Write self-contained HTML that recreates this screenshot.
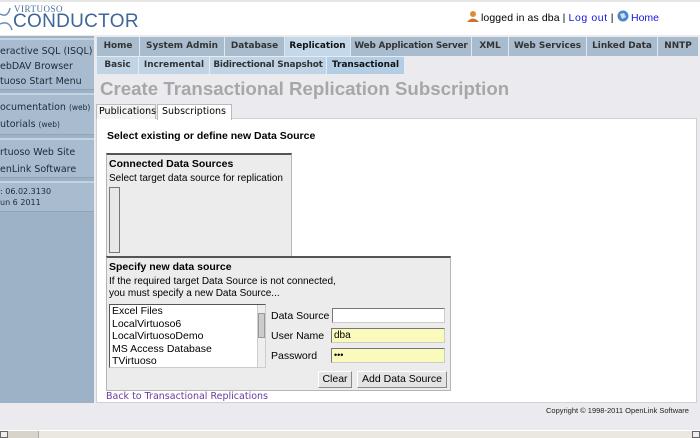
<!DOCTYPE html>
<html><head><style>
*{margin:0;padding:0;box-sizing:border-box}
body{width:700px;height:438px;overflow:hidden;font-family:"DejaVu Sans","Liberation Sans",sans-serif;font-size:10px;background:#ebebef;position:relative;color:#000}
.a{position:absolute}
.hdr{left:0;top:0;width:700px;height:35px;background:#fff;border-top:2px solid #e6e6e6}
.side{left:0;top:36px;width:94px;height:367px;background:#9db2c6;overflow:hidden}
.grp{position:absolute;left:0;width:94px;background:#a9bccf;border-top:2px solid #c4d3e0;border-bottom:1px solid #8ea4b8}
.grp div{height:15px;line-height:15px;white-space:nowrap;overflow:hidden;font-size:9.5px;color:#1a2a3a}
.tab{position:absolute;top:37px;height:19px;line-height:18px;background:#a8bccd;font-weight:bold;font-size:8.9px;color:#333;white-space:nowrap;text-align:center;overflow:hidden;border-left:1px solid #dfe6ee}
.tab.on{background:#c4d8ea;color:#111}
.stab{position:absolute;top:56px;height:18px;line-height:17px;background:#c0d4e6;font-weight:bold;font-size:8.9px;color:#333;white-space:nowrap;text-align:center;overflow:hidden;border-left:1px solid #e4ecf4;border-top:1px solid #e4ecf4}
.stab.on{background:#b2cde4;color:#111}
h1{position:absolute;left:100px;top:78px;font-family:"Liberation Sans",sans-serif;font-size:18.7px;font-weight:bold;color:#a7a7a7;white-space:nowrap}
.panel{left:96px;top:118px;width:601px;height:285px;background:#fff;border:1px solid #d0d0d0}
.ptab{top:104px;height:15px;line-height:14px;font-size:9.5px;padding:0 2px;border:1px solid #bbb;border-bottom:none;background:#f4f4f4;white-space:nowrap}
.box{background:#ececec;border:1px solid #b5b5b5;border-top:2px solid #555}
.fld{position:absolute;height:15px;border:1px solid #777;border-right-color:#ccc;border-bottom-color:#ccc;font-size:10px;line-height:13px;padding-left:2px}
.btn{position:absolute;height:17px;line-height:15px;background:#e4e4e4;border:1px solid #888;border-top-color:#fff;border-left-color:#fff;font-size:10.5px;text-align:center;font-family:"Liberation Sans",sans-serif}
</style></head><body>
<div class="a hdr"></div>
<svg class="a" style="left:0;top:4px" width="14" height="28"><path d="M0 10 Q8 14 10 4 M0 20 Q9 16 12 26" stroke="#6b8db8" stroke-width="1.5" fill="none"/></svg>
<div class="a" style="left:14px;top:4px;font-family:'Liberation Serif',serif;font-size:9px;color:#4a6e9c;letter-spacing:0.5px">VIRTUOSO</div>
<div class="a" style="left:13px;top:11px;font-family:'Liberation Sans',sans-serif;font-size:19px;color:#3f6699;letter-spacing:0.3px">CONDUCTOR</div>
<svg class="a" style="left:467px;top:10px" width="12" height="12"><circle cx="6" cy="4" r="3" fill="#e08a3a"/><path d="M0 12 Q6 5 12 12Z" fill="#d0702a"/></svg>
<div class="a" style="left:481px;top:12px;font-size:10.5px;font-family:'Liberation Sans',sans-serif;white-space:nowrap;letter-spacing:0.1px">logged in as dba | <span style="color:#1515e0;letter-spacing:0.6px">Log out</span> |</div>
<svg class="a" style="left:617px;top:10px" width="12" height="12"><circle cx="6" cy="6" r="5.5" fill="#4a86d0"/><path d="M3 4 L7 3 L9 7 L5 9Z" fill="#cfe2f5"/></svg>
<div class="a" style="left:631px;top:12px;font-size:10.5px;font-family:'Liberation Sans',sans-serif;color:#1515e0">Home</div>
<div class="a side">
<div class="grp" style="top:2px;height:52px;padding-top:4px"><div>eractive SQL (ISQL)</div><div>ebDAV Browser</div><div>tuoso Start Menu</div></div>
<div class="grp" style="top:57px;height:42px;padding-top:5px"><div>ocumentation <small style="font-size:7.5px">(web)</small></div><div style="margin-top:2px">utorials <small style="font-size:7.5px">(web)</small></div></div>
<div class="grp" style="top:102px;height:40px;padding-top:5px"><div>rtuoso Web Site</div><div style="margin-top:2px">enLink Software</div></div>
<div class="grp" style="top:145px;height:31px;padding-top:3px"><div style="height:11px;line-height:11px;font-size:8px">: 06.02.3130</div><div style="height:11px;line-height:11px;font-size:8px">un 6 2011</div></div>
</div>
<div class="tab" style="left:96px;width:43px">Home</div>
<div class="tab" style="left:139px;width:85px">System Admin</div>
<div class="tab" style="left:224px;width:60px">Database</div>
<div class="tab on" style="left:284px;width:66px">Replication</div>
<div class="tab" style="left:350px;width:121px;letter-spacing:-0.2px">Web Application Server</div>
<div class="tab" style="left:471px;width:37px">XML</div>
<div class="tab" style="left:508px;width:78px">Web Services</div>
<div class="tab" style="left:586px;width:71px">Linked Data</div>
<div class="tab" style="left:657px;width:41px">NNTP</div>
<div class="stab" style="left:96px;width:42px">Basic</div>
<div class="stab" style="left:138px;width:71px">Incremental</div>
<div class="stab" style="left:209px;width:117px;letter-spacing:-0.2px">Bidirectional Snapshot</div>
<div class="stab on" style="left:326px;width:78px">Transactional</div>
<h1>Create Transactional Replication Subscription</h1>
<div class="a panel"></div>
<div class="a ptab" style="left:96px;width:60px">Publications</div>
<div class="a ptab" style="left:157px;width:75px;background:#fff;height:16px;padding:0 4px">Subscriptions</div>
<div class="a" style="left:107px;top:130px;font-weight:bold;font-size:10.5px;font-family:'Liberation Sans',sans-serif">Select existing or define new Data Source</div>
<div class="a box" style="left:106px;top:153px;width:186px;height:104px"></div>
<div class="a" style="left:109px;top:158px;font-weight:bold;font-size:10.5px;font-family:'Liberation Sans',sans-serif">Connected Data Sources</div>
<div class="a" style="left:109px;top:173px;font-size:10px;font-family:'Liberation Sans',sans-serif;white-space:nowrap">Select target data source for replication</div>
<div class="a" style="left:109px;top:187px;width:11px;height:66px;border:1px solid #777;background:#e8e8e8"></div>
<div class="a box" style="left:106px;top:256px;width:345px;height:135px"></div>
<div class="a" style="left:109px;top:261px;font-weight:bold;font-size:10.5px;font-family:'Liberation Sans',sans-serif">Specify new data source</div>
<div class="a" style="left:109px;top:276px;font-size:10px;line-height:12px;font-family:'Liberation Sans',sans-serif;white-space:nowrap">If the required target Data Source is not connected,<br>you must specify a new Data Source...</div>
<div class="a" style="left:109px;top:304px;width:157px;height:64px;border:1px solid #555;border-right-color:#ccc;border-bottom-color:#ccc;background:#fff;font-size:10.5px;line-height:12.5px;padding-left:2px;font-family:'Liberation Sans',sans-serif">Excel Files<br>LocalVirtuoso6<br>LocalVirtuosoDemo<br>MS Access Database<br>TVirtuoso</div>
<div class="a" style="left:257px;top:305px;width:8px;height:62px;background:#eee;border-left:1px solid #ccc"><div style="margin-top:8px;height:25px;background:#ccc;border:1px solid #999"></div></div>
<div class="a" style="left:271px;top:310px;font-size:10.5px;font-family:'Liberation Sans',sans-serif">Data Source</div>
<div class="a" style="left:271px;top:330px;font-size:10.5px;font-family:'Liberation Sans',sans-serif">User Name</div>
<div class="a" style="left:271px;top:350px;font-size:10.5px;font-family:'Liberation Sans',sans-serif">Password</div>
<div class="fld" style="left:332px;top:308px;width:113px;background:#fff"></div>
<div class="fld" style="left:331px;top:328px;width:114px;background:#fafabd;font-family:'Liberation Sans',sans-serif">dba</div>
<div class="fld" style="left:331px;top:348px;width:114px;background:#fafabd;font-size:9px;font-family:'Liberation Sans',sans-serif">•••</div>
<div class="btn" style="left:318px;top:371px;width:34px">Clear</div>
<div class="btn" style="left:357px;top:371px;width:90px">Add Data Source</div>
<div class="a" style="left:106px;top:391px;font-size:9.5px;color:#6a3aa0;white-space:nowrap">Back to Transactional Replications</div>
<div class="a" style="left:546px;top:406px;font-size:7.5px;font-family:'Liberation Sans',sans-serif;color:#222;white-space:nowrap">Copyright © 1998-2011 OpenLink Software</div>
<div class="a" style="left:0;top:430px;width:700px;height:8px;background:#d8d4cc;border-top:1px solid #fff"></div>
<div class="a" style="left:0;top:431px;width:8px;height:7px;background:#eee;border:1px solid #666"></div>
<div class="a" style="left:692px;top:431px;width:8px;height:7px;background:#eee;border:1px solid #666"></div>
<div class="a" style="left:38px;top:431px;width:654px;height:7px;background:#ebe8e2;border-left:1px solid #aaa"></div>
</body></html>
